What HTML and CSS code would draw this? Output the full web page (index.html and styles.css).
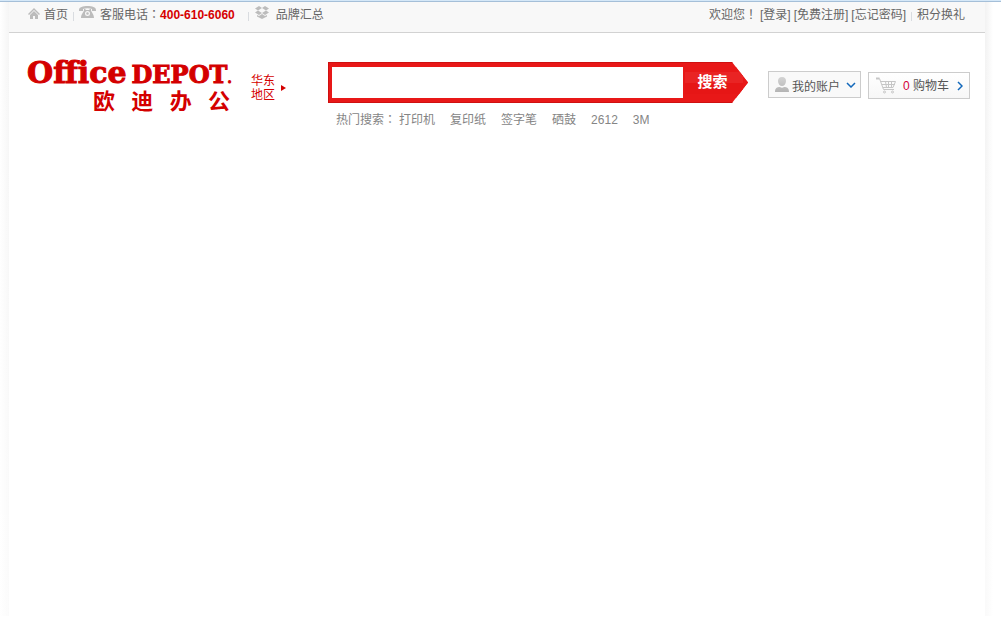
FILE: index.html
```html
<!DOCTYPE html>
<html lang="zh-CN">
<head>
<meta charset="utf-8">
<title>欧迪办公</title>
<link rel="stylesheet" href="styles.css">
</head>
<body>
<div class="shell">
  <div class="page">
    <nav class="topbar">
      <div class="group">
        <a class="home" href="#"><svg class="home-icon" viewBox="0 0 12 11" width="12" height="11"><path d="M0 6 6 0l6 6-1 1-5-5-5 5z"/><path d="M2 7 6 3l4 4v4H7V8H5v3H2z"/></svg>首页</a>
        <i class="sep"></i>
        <svg class="phone-icon" viewBox="0 0 17 13" width="17" height="13"><path d="M0 4C0 1 4 0 8.500 0S17 1 17 4v1h-4V3C10 2 7 2 4 3v2H0z"/><path fill-rule="evenodd" d="M5 3h1.500v1h4V3H12v1c0 2 3 4 3 8H2c0-4 3-6 3-8zm3.500 2a2.500 2.500 0 1 0 0 5 2.500 2.500 0 0 0 0-5zm0 1.200a1.300 1.300 0 1 1 0 2.600 1.300 1.300 0 0 1 0-2.600z"/></svg>
        <span class="tel">客服电话<span class="punct" lang="zh-TW">：</span><b>400-610-6060</b></span>
        <i class="sep"></i>
        <a class="brands" href="#"><svg class="brand-icon" viewBox="0 0 14 13" width="14" height="13"><path d="M4 0 7 2 3 4.500 0 2.500zM10 0l4 2.500-3 2L7 2zM0 6.500l3-2L7 7 4 9zM14 6.500l-3-2L7 7l3 2zM2 9l2 1 3-2 3 2 2-1v1.500L7 13l-5-2.500z"/></svg>品牌汇总</a>
      </div>
      <div class="group account-links">
        <span class="welcome">欢迎您<span class="punct" lang="zh-TW">！</span></span>
        <a href="#">[登录]</a>
        <a href="#">[免费注册]</a>
        <a href="#">[忘记密码]</a>
        <i class="sep"></i>
        <a class="points" href="#">积分换礼</a>
      </div>
    </nav>
    <header class="header">
      <a class="logo" href="#">
        <span class="logo-name"><span class="logo-office">Office</span><span class="logo-depot">DEPOT</span><small>.</small></span>
        <span class="logo-cn"><span>欧</span><span>迪</span><span>办</span><span>公</span></span>
      </a>
      <button class="region" type="button"><span>华东<br>地区</span><svg viewBox="0 0 5 6" width="5" height="6"><path d="M0 0 5 3 0 6z"/></svg></button>
      <div class="search-area">
        <form class="search">
          <input class="search-input" type="text" aria-label="搜索商品">
          <button class="search-button" type="submit">搜索</button>
        </form>
        <div class="hot">
          <span class="hot-title">热门搜索<span class="punct" lang="zh-TW">：</span></span>
          <a href="#">打印机</a><a href="#">复印纸</a><a href="#">签字笔</a><a href="#">硒鼓</a><a href="#">2612</a><a href="#">3M</a>
        </div>
      </div>
      <div class="tools">
        <button class="tool my" type="button">
          <svg viewBox="0 0 16 16" width="16" height="16"><defs><linearGradient id="person" x2="0" y2="1"><stop stop-color="#d4d4d4"/><stop offset="1" stop-color="#b4b4b4"/></linearGradient></defs><path fill="url(#person)" d="M8 0c3 0 4 2 4 4 0 3-2 5-4 5S4 7 4 4c0-2 1-4 4-4zM1 15c0-4 2-5 5-5 1 1 3 1 4 0 3 0 5 1 5 5z"/></svg>
          <span>我的账户</span>
          <svg class="arrow" viewBox="0 0 10 6" width="10" height="6"><path d="m1 1 4 4 4-4"/></svg>
        </button>
        <a class="tool cart" href="#">
          <svg viewBox="0 0 21 17" width="21" height="17" fill="none" stroke="#c6c6c6"><path stroke-width="2" d="M0 1.500h3.500"/><path d="M3.500 1.500l4 11H18M4.500 4.500h15l-2.500 6H7M6 7.500h13M9.500 4.500l1 6M12.500 4.500v6M15.500 4.500v6"/><circle cx="8.500" cy="15" r="1"/><circle cx="16.500" cy="15" r="1"/></svg>
          <span class="cart-text"><em>0</em> 购物车</span>
          <svg class="arrow" viewBox="0 0 6 10" width="6" height="10"><path d="m1 1 4 4-4 4"/></svg>
        </a>
      </div>
    </header>
  </div>
</div>
</body>
</html>
```
FILE: styles.css
```css
* { box-sizing: border-box; }
body {
  margin: 0;
  background: #fff;
  color: #666;
  font: 12px/16px "Liberation Sans", "Noto Sans CJK SC", sans-serif;
  border-top: 1px solid #d5e8f8;
}
a { color: inherit; text-decoration: none; }
button { font: inherit; cursor: pointer; }
svg { flex: none; }
.punct { font-family: "Noto Sans CJK TC", sans-serif; line-height: 1; }
.shell {
  border-top: 1px solid #a5bfd8;
  padding: 0 16px 0 9px;
  display: grid;
  min-height: calc(100vh - 27px);
  background:
    linear-gradient(transparent, #ffffff99) 0 0 / 100% 100%,
    linear-gradient(to right, #fff, #f5f5f5) 0 0 / 9px 100% no-repeat,
    linear-gradient(to left, #fff, #f2f2f2) calc(100% - 8px) 0 / 8px 100% no-repeat;
}
.page { background: #fff; }
.topbar {
  height: 31px;
  padding: 0 20px 4px 19px;
  background: #f8f8f8;
  border-bottom: 1px solid #d2d2d2;
  display: flex;
  justify-content: space-between;
  white-space: nowrap;
}
.group { display: flex; align-items: center; }
.topbar svg { fill: #bcbcbc; }
.sep { width: 1px; height: 9px; background: #d9dce0; margin: 2px 5px 0; }
.home, .brands { display: flex; align-items: center; }
.home { gap: 4px; }
.home-icon { margin-bottom: 3px; }
.phone-icon { margin: 0 4px 5px 0; }
.brand-icon { margin: 0 7px 5px 1px; }
.tel { margin-right: 8px; }
.tel b { color: #d60000; }
.account-links { gap: 3px; }
.account-links .sep { margin: 2px 2px 0; }
.header {
  display: flex;
  align-items: flex-start;
  padding: 25px 15px 0 18px;
}
.logo { color: #d40000; width: 206px; white-space: nowrap; }
.logo-name {
  display: flex;
  align-items: baseline;
  padding-top: 3px;
  font: bold 30px/24px "DejaVu Serif", serif;
  -webkit-text-stroke: 1px #d40000;
}
.logo-depot { font-size: 24px; margin-left: 5px; }
.logo-name small { font-size: 12px; }
.logo-cn {
  display: flex;
  justify-content: space-between;
  padding: 0 3px 0 66px;
  font: bold 22px/16px "Noto Sans CJK SC", sans-serif;
}
.region {
  display: flex;
  align-items: center;
  gap: 6px;
  margin: 16px 0 0 18px;
  padding: 0;
  border: 0;
  background: none;
  color: #d40000;
  line-height: 14px;
  text-align: left;
  white-space: nowrap;
}
.region svg { fill: #d40000; }
.search-area { flex: 1; margin: 4px 20px 0 42px; }
.search {
  display: flex;
  height: 41px;
  background: #e81818;
  border: solid #cf1010;
  border-width: 1px 0 1px 1px;
  padding: 4px 0 4px 3px;
  clip-path: polygon(0 0, calc(100% - 16px) 0, 100% 50%, calc(100% - 16px) 100%, 0 100%);
}
.search-input {
  flex: 1;
  min-width: 0;
  border: 0;
  padding: 0 8px;
  background: #fff;
  outline: 0;
  font: inherit;
}
.search-button {
  width: 65px;
  border: 0;
  padding: 0 6px 3px 0;
  color: #fff;
  font: bold 15px/20px "Noto Sans CJK SC", sans-serif;
  background: #e81818 linear-gradient(#e92424 0 50%, #e61616 50%) 2px 5px / 58px 22px no-repeat;
}
.hot {
  display: flex;
  gap: 15px;
  margin: 9px 0 0 8px;
  color: #858585;
  white-space: nowrap;
}
.hot-title { margin-right: -12px; }
.tools { display: flex; gap: 7px; margin-top: 13px; }
.tool {
  display: flex;
  align-items: center;
  height: 27px;
  border: 1px solid #ccc;
  background: linear-gradient(#fff, #f7f7f7);
  color: #555;
  white-space: nowrap;
}
.my { width: 93px; padding: 0 5px; background: #f9f9f9; }
.my span { margin: 4px 6px 0 2px; }
.cart { width: 102px; padding: 0 7px; margin-top: 1px; }
.cart-text { margin: 0 8px 0 6px; }
.cart em { color: #d4003a; font-style: normal; }
.arrow { fill: none; stroke: #1268bb; stroke-width: 1.5; }
```
